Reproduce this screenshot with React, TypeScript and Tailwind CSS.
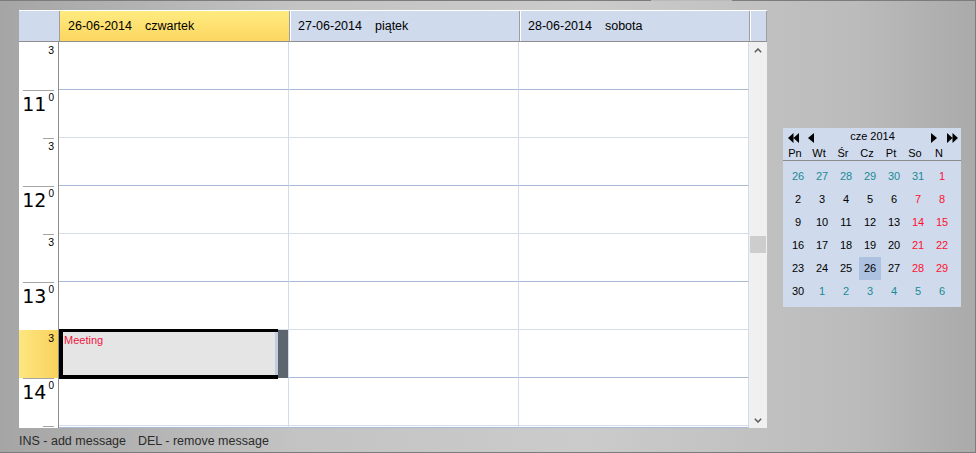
import React from "react";

type Slot = { hour?: string; selected?: boolean; first?: boolean; partial?: boolean };

const slots: Slot[] = [
  { first: true },
  { hour: "11" },
  {},
  { hour: "12" },
  {},
  { hour: "13" },
  { selected: true },
  { hour: "14" },
  { partial: true },
];

const days = [
  { date: "26-06-2014", name: "czwartek", today: true },
  { date: "27-06-2014", name: "piątek" },
  { date: "28-06-2014", name: "sobota" },
];

type Tone = "muted" | "normal" | "weekend";
type CalDay = { d: number; tone: Tone; selected?: boolean };

const weeks: CalDay[][] = [
  [26, 27, 28, 29, 30, 31].map((d) => ({ d, tone: "muted" as Tone })).concat([{ d: 1, tone: "weekend" }]),
  [2, 3, 4, 5, 6, 7, 8].map((d) => ({ d, tone: (d >= 7 ? "weekend" : "normal") as Tone })),
  [9, 10, 11, 12, 13, 14, 15].map((d) => ({ d, tone: (d >= 14 ? "weekend" : "normal") as Tone })),
  [16, 17, 18, 19, 20, 21, 22].map((d) => ({ d, tone: (d >= 21 ? "weekend" : "normal") as Tone })),
  [23, 24, 25, 26, 27, 28, 29].map((d) => ({ d, tone: (d >= 28 ? "weekend" : "normal") as Tone, selected: d === 26 })),
  [{ d: 30, tone: "normal" as Tone }].concat([1, 2, 3, 4, 5, 6].map((d) => ({ d, tone: "muted" as Tone }))),
];

const dayNames = ["Pn", "Wt", "Śr", "Cz", "Pt", "So", "N"];

export default function App() {
  return (
    <div className="flex h-[453px] w-[976px] flex-col overflow-hidden border-r border-b border-[#7c7c7c] bg-[linear-gradient(to_right,#a5a5a5_0%,#c3c3c3_30%,#cbcbcb_60%,#bbbbbb_88%,#aaaaaa_100%)] font-['Liberation_Sans',Arial,sans-serif] text-black">
      {/* top edge */}
      <div className="flex h-px shrink-0">
        <div className="w-[651px] bg-[#7c7c7c]" />
        <div className="w-[81px] bg-[#b9b9b9]" />
        <div className="flex-1 bg-[#7c7c7c]" />
      </div>

      <div className="flex flex-1 pt-[9px] pl-[19px]">
        <div className="flex w-[748px] flex-col">
          <Scheduler />
          <div className="mt-[6px] flex text-[12.5px] leading-[15px] text-[#2b2b2b]">
            <span>INS - add message</span>
            <span className="ml-[12px]">DEL - remove message</span>
          </div>
        </div>
        <MiniCalendar />
      </div>
    </div>
  );
}

function Scheduler() {
  return (
    <div className="flex h-[418px] flex-col overflow-hidden bg-white">
      {/* day header */}
      <div className="flex h-[32px] shrink-0 border-y border-t-white border-b-[#8f8f8f] text-[12.5px]">
        <div className="w-[41px] border-r border-r-[#9e9e9e] bg-[#cfdaec]" />
        {days.map((d) => (
          <div
            key={d.date}
            className={
              d.today
                ? "flex w-[230px] items-center border-r border-r-[#9e9e9e] bg-linear-to-b from-[#ffeb80] to-[#fcd660] pt-px pl-[8px]"
                : "flex w-[230px] items-center border-r border-l border-r-[#9e9e9e] border-l-white bg-[#cfdaec] pt-px pl-[7px]"
            }
          >
            <span>{d.date}</span>
            <span className="ml-[13px]">{d.name}</span>
          </div>
        ))}
        <div className="w-[17px] border-r border-l border-r-[#9e9e9e] border-l-white bg-[#cfdaec]" />
      </div>

      {/* body */}
      <div className="flex flex-1 overflow-hidden">
        <div className="flex w-[730px] flex-col">
          {slots.map((s, i) => (
            <Row key={i} slot={s} />
          ))}
        </div>
        <div className="flex w-[18px] flex-col items-center bg-[#f0f0f0]">
          <Chevron className="mt-[6px]" />
          <div className="mt-[183px] h-[17px] w-[16px] shrink-0 bg-[#cdcdcd]" />
          <Chevron down className="mt-[165px]" />
        </div>
      </div>
    </div>
  );
}

function Row({ slot }: { slot: Slot }) {
  // line under a half-hour row (before a full hour) is darker
  const line = slot.hour ? "border-b-[#d6dde8]" : "border-b-[#a9bad7]";
  return (
    <div className={`flex shrink-0 ${slot.partial ? "h-[2px]" : "h-[48px]"}`}>
      <TimeCell slot={slot} />
      {days.map((d, j) => (
        <div key={d.date} className={`relative w-[230px] border-r border-b border-r-[#d3dcea] ${line}`}>
          {slot.selected && j === 0 && <Meeting />}
        </div>
      ))}
    </div>
  );
}

function TimeCell({ slot }: { slot: Slot }) {
  return (
    <div
      className={`flex w-[40px] flex-col items-end border-r border-r-[#8e8e8e] pr-[4px] ${
        slot.selected ? "bg-linear-to-r from-[#fde680] to-[#f9d25d]" : ""
      }`}
    >
      {slot.hour ? (
        <>
          <div className="h-px w-[31px] bg-[#a5a5a5]" />
          <div className="flex items-start">
            <span className="mt-[4px] font-['DejaVu_Sans',sans-serif] text-[19px] leading-none">{slot.hour}</span>
            <span className="mt-[2px] ml-[2px] text-[10px] leading-none">0</span>
          </div>
        </>
      ) : (
        <>
          <div className={`h-px w-[11px] ${slot.first || slot.selected ? "" : "bg-[#a5a5a5]"}`} />
          {!slot.partial && <span className="mt-[2px] text-[10.5px] leading-none">3</span>}
        </>
      )}
    </div>
  );
}

function Meeting() {
  return (
    <>
      <div className="absolute -top-px left-0 flex h-[50px] w-[219px] border-t-[3px] border-b-4 border-l-4 border-black bg-[#e5e5e5]">
        <div className="flex-1 pt-[3px] pl-[1px] text-[11px] leading-none text-[#f0163f]">Meeting</div>
        <div className="w-[3px] bg-[#c3cde0]" />
      </div>
      <div className="absolute top-0 right-0 h-[48px] w-[10px] bg-[#5d656f]" />
    </>
  );
}

function Chevron({ down, className }: { down?: boolean; className?: string }) {
  return (
    <svg width="8" height="5" viewBox="0 0 8 5" className={`shrink-0 ${className ?? ""}`} aria-hidden="true">
      <path
        d={down ? "M0.8 0.8 L4 4 L7.2 0.8" : "M0.8 4.2 L4 1 L7.2 4.2"}
        fill="none"
        stroke="#5a5a5a"
        strokeWidth="1.5"
      />
    </svg>
  );
}

function Triangle({ left, className }: { left?: boolean; className?: string }) {
  return (
    <svg width="6" height="10" viewBox="0 0 6 10" className={className} aria-hidden="true">
      <path d={left ? "M0 5 L6 0 L6 10 Z" : "M6 5 L0 0 L0 10 Z"} fill="#000" />
    </svg>
  );
}

function DoubleTriangle({ left, className }: { left?: boolean; className?: string }) {
  return (
    <svg width="11" height="10" viewBox="0 0 11 10" className={className} aria-hidden="true">
      <path
        d={left ? "M0 5 L5.5 0 L5.5 10 Z M5.5 5 L11 0 L11 10 Z" : "M11 5 L5.5 0 L5.5 10 Z M5.5 5 L0 0 L0 10 Z"}
        fill="#000"
      />
    </svg>
  );
}

const toneClass: Record<Tone, string> = {
  muted: "text-[#1a8a96]",
  normal: "text-black",
  weekend: "text-[#ff1030]",
};

function MiniCalendar() {
  return (
    <div className="mt-[118px] ml-[16px] flex h-[179px] w-[178px] flex-col bg-[#cfdaec] text-[11px]">
      <div className="flex h-[19px] shrink-0 items-center pr-[3px] pl-[5px]">
        <DoubleTriangle left />
        <Triangle left className="ml-[9px]" />
        <span className="mb-[2px] flex-1 text-center leading-none">cze 2014</span>
        <Triangle />
        <DoubleTriangle className="ml-[10px]" />
      </div>
      <div className="grid h-[12px] w-[168px] grid-cols-7 leading-[12px]">
        {dayNames.map((n) => (
          <span key={n} className="text-center">
            {n}
          </span>
        ))}
      </div>
      <div className="mt-px h-px shrink-0 bg-[#8b8b8b]" />
      <div className="mt-[4px] flex flex-col pl-[3px]">
        {weeks.map((w, i) => (
          <div key={i} className="flex h-[23px]">
            {w.map((c, j) => (
              <div key={j} className="flex w-[24px] justify-center">
                <span
                  className={`flex h-[23px] w-[22px] items-center justify-center ${toneClass[c.tone]} ${
                    c.selected ? "bg-[#adc1e0]" : ""
                  }`}
                >
                  {c.d}
                </span>
              </div>
            ))}
          </div>
        ))}
      </div>
    </div>
  );
}
